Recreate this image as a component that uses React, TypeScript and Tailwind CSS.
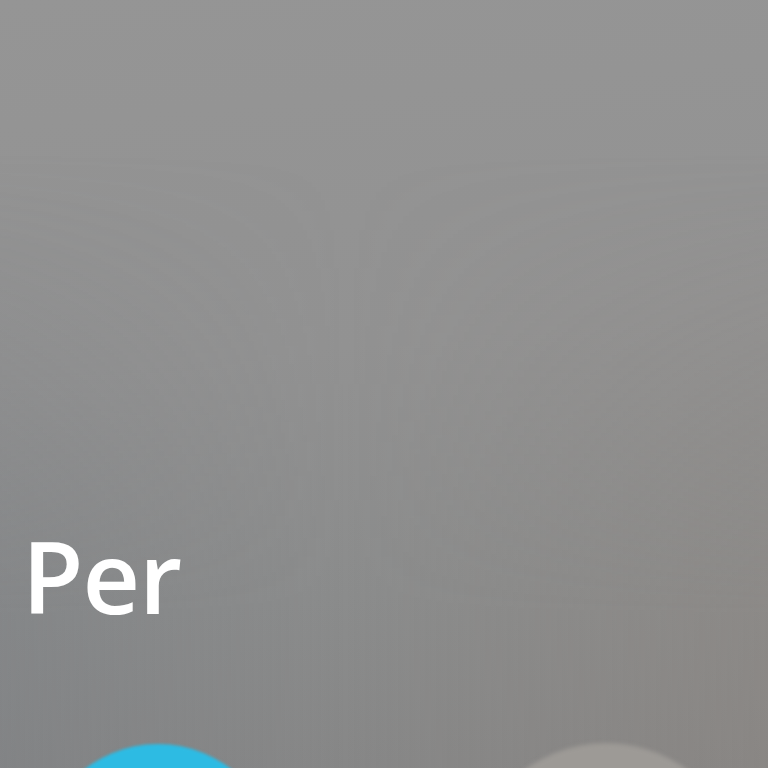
export default function App() {
  return (
    <div className="relative flex h-[768px] w-[768px] flex-col overflow-hidden bg-[linear-gradient(175deg,#959595_0%,#929292_45%,#8b8c8c_75%,#868686_100%)]">
      {/* cool tint lower left, warm tint lower right */}
      <div className="pointer-events-none absolute inset-0 bg-[linear-gradient(to_right,rgba(118,122,128,0.3)_0%,rgba(140,140,140,0)_45%,rgba(146,136,128,0.3)_100%)] [mask-image:linear-gradient(to_bottom,transparent_20%,black_80%)]" />
      <div className="relative pt-[525px] pl-[22px]">
        <h1 className="text-[100px] leading-none font-semibold text-white [font-family:'Open_Sans',sans-serif] tracking-[-1px]">
          Per
        </h1>
      </div>
      <div className="relative mt-auto flex h-[24px] items-start">
        <div className="ml-[38px] h-[240px] w-[240px] shrink-0 rounded-full bg-[#2dbbe3] blur-[1.5px]" />
        <div className="ml-[191px] mt-[-1px] h-[274px] w-[274px] shrink-0 rounded-full bg-[#9d9a96] blur-[2px]" />
      </div>
    </div>
  )
}
